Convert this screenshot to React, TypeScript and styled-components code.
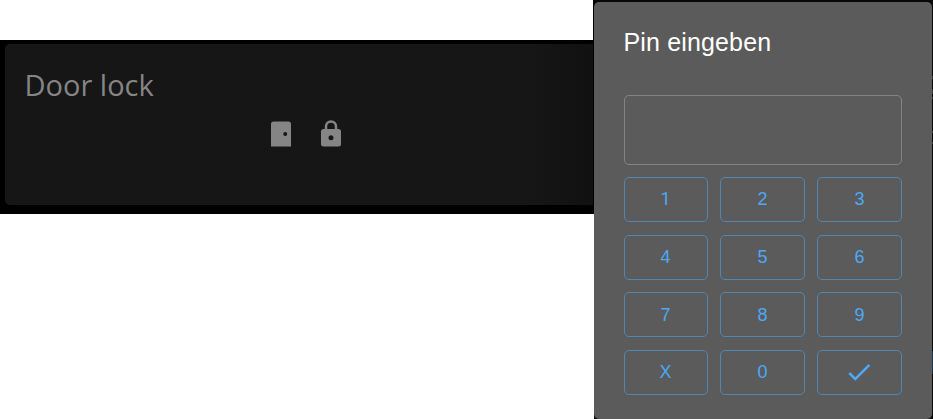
import React from "react";
import styled, { createGlobalStyle } from "styled-components";

const GlobalStyle = createGlobalStyle`
  * { box-sizing: border-box; }
  body { margin: 0; background: #fff; overflow: hidden; }
`;

const Page = styled.main`
  display: flex;
  align-items: flex-start;
  width: 933px;
  height: 419px;
  overflow: hidden;
`;

const LockBackdrop = styled.section`
  width: 593px;
  height: 174px;
  margin-top: 40px;
  padding: 4px 0 9px 5px;
  background: #000;
`;

const LockCard = styled.div`
  height: 161px;
  padding: 20px 20px 0;
  border-radius: 5px 0 0 5px;
  background: linear-gradient(to right, #161616 520px, #111);
`;

const CardTitle = styled.h1`
  margin: 0 0 0 -0.5px;
  font: 400 29px/42px "Open Sans", "Noto Sans", sans-serif;
  color: #858585;
`;

const StateIcons = styled.div`
  display: flex;
  gap: 20px;
  margin: 13px 0 0 241px;
  color: #858585;

  svg { display: block; }
`;

const DialogBackdrop = styled.section`
  width: 340px;
  height: 419px;
  padding: 2px 1px 0;
  background:
    linear-gradient(#000, #000) 0 0 / 1px 214px no-repeat,
    linear-gradient(
      #080808 76px, #383838 76px 79px, #080808 79px 89px,
      #383838 89px 94px, #080808 94px 97px, #383838 97px 99px,
      #080808 99px 131px, #383838 131px 133px, #080808 133px 142px,
      #383838 142px 144px, #080808 144px 351px, #17364e 351px 374px,
      #080808 374px
    ) 1px 0 / 339px 419px no-repeat;
`;

const Dialog = styled.div`
  height: 417px;
  padding: 20px 30px 0;
  border-radius: 5px;
  background: #5b5b5b;
`;

const DialogTitle = styled.h2`
  margin: 0 0 33px -0.5px;
  font: 400 25px/40px "Liberation Sans", Arial, sans-serif;
  letter-spacing: 0.15px;
  color: #fff;
`;

const PinInput = styled.input`
  display: block;
  width: 278px;
  height: 70px;
  padding: 0 16px;
  border: 1px solid #848484;
  border-radius: 5px;
  outline: none;
  background: transparent;
  color: #fff;
  font: 24px "Liberation Sans", Arial, sans-serif;
`;

const Keypad = styled.div`
  display: grid;
  grid-template-columns: 84px 85px 85px;
  grid-auto-rows: 45px;
  gap: 12.67px 12px;
  width: 278px;
  margin-top: 11.9px;
`;

const Key = styled.button<{ $plain?: boolean }>`
  display: flex;
  align-items: center;
  justify-content: center;
  padding: 0;
  border: 1px solid #5087b3;
  border-radius: 5px;
  background: transparent;
  color: #4da9f5;
  font-family: ${({ $plain }) =>
    $plain ? 'Roboto, sans-serif' : '"Liberation Sans", Arial, sans-serif'};
  font-size: 18px;
  font-weight: 400;
  line-height: 20px;

  &:nth-child(3n + 1),
  &:last-child {
    padding-right: 1px;
  }
`;

const CheckIcon = styled.svg`
  display: block;
  flex: none;
  width: 30px;
  height: 30px;
`;

const keys = ["1", "2", "3", "4", "5", "6", "7", "8", "9", "X", "0"];

export default function App() {
  return (
    <>
      <GlobalStyle />
      <Page>
        <LockBackdrop>
          <LockCard>
            <CardTitle>Door lock</CardTitle>
            <StateIcons>
              <svg width="30" height="30" viewBox="0 0 30 30">
                <path
                  fill="currentColor"
                  fillRule="evenodd"
                  d="M7.5 2.5h15a2.5 2.5 0 0 1 2.5 2.5v22.5H5V5a2.500 2.500 0 0 1 2.500-2.500zM19.250 13a2 2 0 1 0 0 4a2 2 0 0 0 0-4z"
                />
              </svg>
              <svg width="30" height="30" viewBox="0 0 24 24">
                <path
                  fill="currentColor"
                  d="M12 17a2 2 0 0 0 2-2c0-1.110-.9-2-2-2a2 2 0 1 0 0 4m6-9a2 2 0 0 1 2 2v10a2 2 0 0 1-2 2H6a2 2 0 0 1-2-2V10c0-1.110.9-2 2-2h1V6a5 5 0 0 1 10 0v2h1m-6-5a3 3 0 0 0-3 3v2h6V6a3 3 0 0 0-3-3Z"
                />
              </svg>
            </StateIcons>
          </LockCard>
        </LockBackdrop>
        <DialogBackdrop>
          <Dialog>
            <DialogTitle>Pin eingeben</DialogTitle>
            <PinInput aria-label="Pin" />
            <Keypad>
              {keys.map((key) => (
                <Key key={key} $plain={key === "1"}>{key}</Key>
              ))}
              <Key aria-label="OK">
                <CheckIcon viewBox="0 0 24 24">
                  <path
                    fill="currentColor"
                    d="M21 7 9 19 3.500 13.500 4.910 12.090 9 16.170 19.590 5.590 21 7Z"
                  />
                </CheckIcon>
              </Key>
            </Keypad>
          </Dialog>
        </DialogBackdrop>
      </Page>
    </>
  );
}
